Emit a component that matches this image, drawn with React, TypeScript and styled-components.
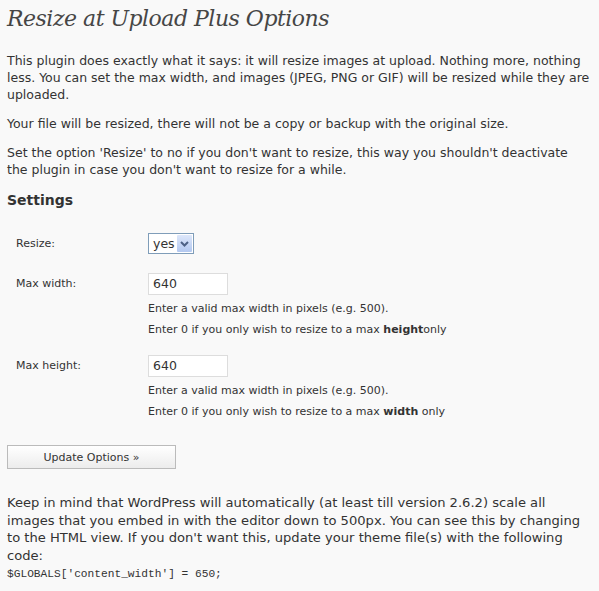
import React from "react";
import styled, { createGlobalStyle } from "styled-components";

const Global = createGlobalStyle`
  html, body { margin: 0; padding: 0; background: #f9f9f9; }
  body { font-family: "DejaVu Sans", Verdana, sans-serif; color: #333; }
`;

const Wrap = styled.div`
  padding: 4px 0 10px 7px;
  width: 583px;
`;

const Title = styled.h2`
  font-family: "DejaVu Serif", Georgia, serif;
  font-style: italic;
  font-weight: normal;
  font-size: 22px;
  letter-spacing: -0.5px;
  color: #464646;
  margin: 0 0 18px 0;
  line-height: 30px;
`;

const P = styled.p<{ $large?: boolean }>`
  font-size: ${(p) => (p.$large ? "13.1px" : "12.5px")};
  line-height: ${(p) => (p.$large ? "17.5px" : "17px")};
  margin: 0 0 12px 0;
`;

const H3 = styled.h3`
  font-size: 14px;
  font-weight: bold;
  margin: 13px 0 24px 0;
  line-height: 18px;
  color: #333;
`;

const Form = styled.div`
  display: flex;
  flex-direction: column;
  gap: 18px;
  padding-left: 9px;
`;

const Row = styled.div`
  display: grid;
  grid-template-columns: 132px 1fr;
  align-items: start;
`;

const Label = styled.div`
  font-size: 11px;
  padding-top: 4px;
  line-height: 14px;
`;

const Field = styled.div`
  display: flex;
  flex-direction: column;
  align-items: flex-start;
  gap: 7px;
`;

const Select = styled.div`
  display: inline-flex;
  align-items: center;
  justify-content: space-between;
  box-sizing: border-box;
  width: 46px;
  height: 21px;
  margin-bottom: 1px;
  border: 1px solid #7f9db9;
  background: #fff;
  font-size: 12.5px;
  padding-left: 4px;
`;

const Arrow = styled.span`
  width: 15px;
  height: 17px;
  margin-right: 1px;
  background: linear-gradient(#dde7fa, #b3c8f0);
  border-radius: 1px;
  display: flex;
  align-items: center;
  justify-content: center;
`;

const Input = styled.div`
  box-sizing: border-box;
  width: 80px;
  height: 22px;
  border: 1px solid #ddd;
  background: #fff;
  font-size: 12.5px;
  padding-left: 4px;
  line-height: 20px;
`;

const Help = styled.div`
  font-size: 11px;
  line-height: 14px;
  color: #333;
  b { font-weight: bold; }
`;

const Button = styled.div`
  box-sizing: border-box;
  width: 169px;
  height: 24px;
  border: 1px solid #bbb;
  background: linear-gradient(#fff, #ececec);
  font-size: 11px;
  display: flex;
  align-items: center;
  justify-content: center;
  margin: 26px 0 25px 0;
`;

const Code = styled.span`
  font-family: "Liberation Mono", "Courier New", monospace;
  font-size: 11.2px;
`;

export default function App() {
  return (
    <Wrap>
      <Global />
      <Title>Resize at Upload Plus Options</Title>
      <P>
        This plugin does exactly what it says: it will resize images at upload. Nothing more, nothing less. You can set
        the max width, and images (JPEG, PNG or GIF) will be resized while they are uploaded.
      </P>
      <P>Your file will be resized, there will not be a copy or backup with the original size.</P>
      <P>
        Set the option 'Resize' to no if you don't want to resize, this way you shouldn't deactivate the plugin in case
        you don't want to resize for a while.
      </P>
      <H3>Settings</H3>
      <Form>
        <Row>
          <Label>Resize:</Label>
          <Field>
            <Select>
              yes
              <Arrow>
                <svg width="9" height="6" viewBox="0 0 9 6">
                  <path d="M1 1 L4.5 4.5 L8 1" stroke="#4d6185" strokeWidth="2" fill="none" />
                </svg>
              </Arrow>
            </Select>
          </Field>
        </Row>
        <Row>
          <Label>Max width:</Label>
          <Field>
            <Input>640</Input>
            <Help>Enter a valid max width in pixels (e.g. 500).</Help>
            <Help>
              Enter 0 if you only wish to resize to a max <b>height</b>only
            </Help>
          </Field>
        </Row>
        <Row>
          <Label>Max height:</Label>
          <Field>
            <Input>640</Input>
            <Help>Enter a valid max width in pixels (e.g. 500).</Help>
            <Help>
              Enter 0 if you only wish to resize to a max <b>width</b> only
            </Help>
          </Field>
        </Row>
      </Form>
      <Button>Update Options »</Button>
      <P $large>
        Keep in mind that WordPress will automatically (at least till version 2.6.2) scale all images that you embed in
        with the editor down to 500px. You can see this by changing to the HTML view. If you don't want this, update
        your theme file(s) with the following code:
        <br />
        <Code>$GLOBALS['content_width'] = 650;</Code>
      </P>
    </Wrap>
  );
}
